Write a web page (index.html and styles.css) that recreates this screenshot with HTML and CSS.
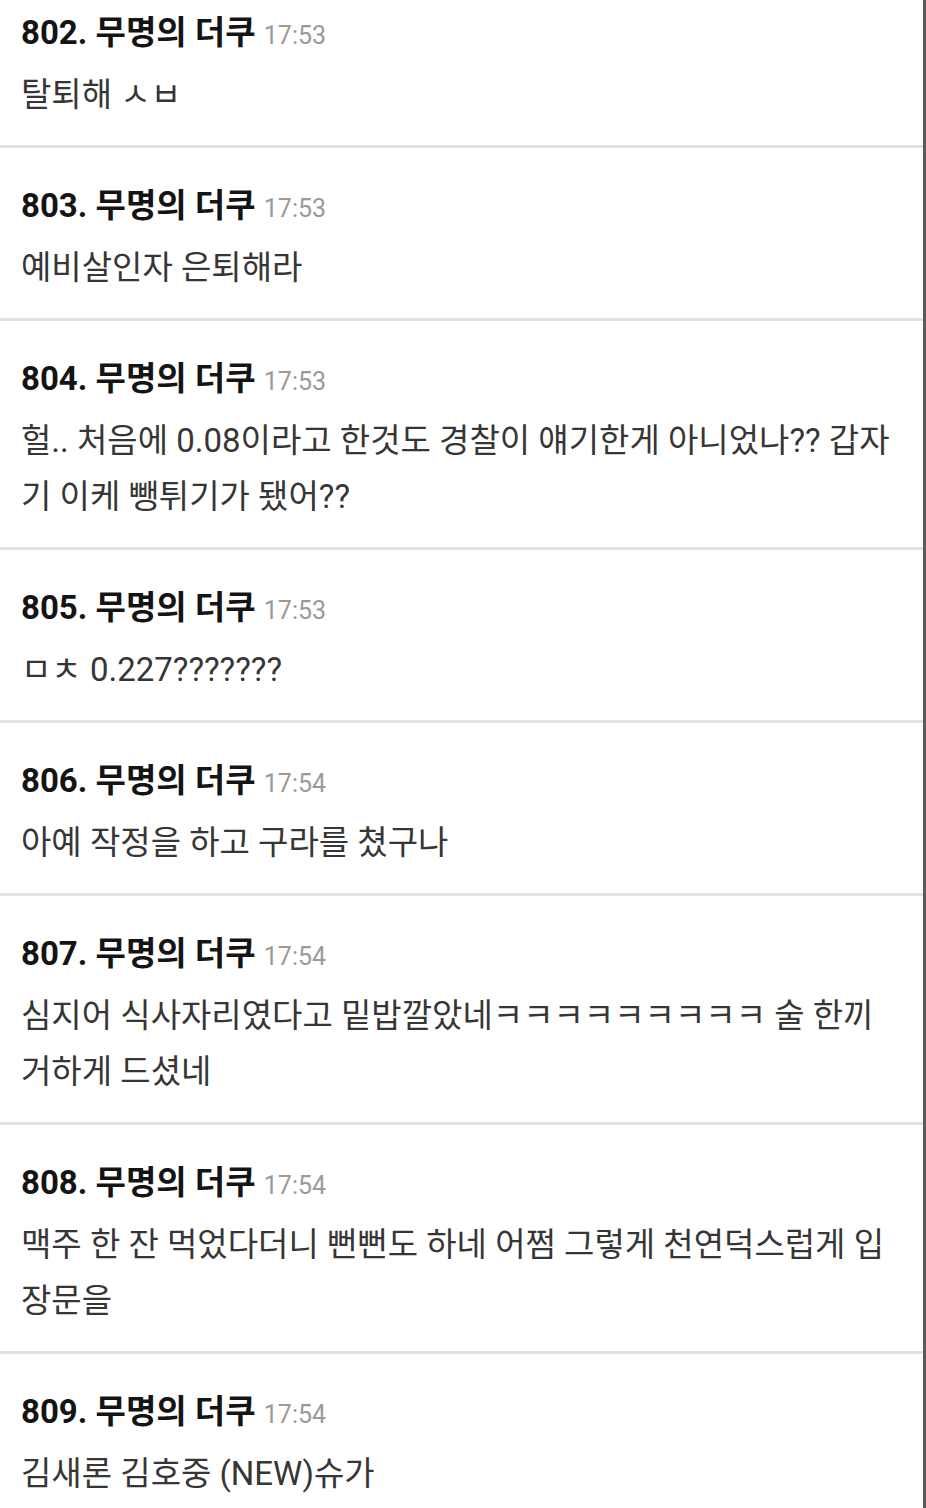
FILE: index.html
```html
<!DOCTYPE html>
<html lang="ko">
<head>
    <meta charset="UTF-8">
    <meta name="viewport" content="width=device-width, initial-scale=1.0">
    <title>댓글</title>
    <link rel="stylesheet" href="styles.css">
</head>
<body>
    <main class="comment-list">
        <div class="comment">
            <div class="comment-head"><span class="num">802.</span> 무명의 더쿠 <span class="time">17:53</span></div>
            <p class="comment-body">탈퇴해 ㅅㅂ</p>
        </div>
        <div class="comment">
            <div class="comment-head"><span class="num">803.</span> 무명의 더쿠 <span class="time">17:53</span></div>
            <p class="comment-body">예비살인자 은퇴해라</p>
        </div>
        <div class="comment">
            <div class="comment-head"><span class="num">804.</span> 무명의 더쿠 <span class="time">17:53</span></div>
            <p class="comment-body">헐.. 처음에 0.08이라고 한것도 경찰이 얘기한게 아니었나?? 갑자기 이케 뺑튀기가 됐어??</p>
        </div>
        <div class="comment">
            <div class="comment-head"><span class="num">805.</span> 무명의 더쿠 <span class="time">17:53</span></div>
            <p class="comment-body">ㅁㅊ 0.227???????</p>
        </div>
        <div class="comment">
            <div class="comment-head"><span class="num">806.</span> 무명의 더쿠 <span class="time">17:54</span></div>
            <p class="comment-body">아예 작정을 하고 구라를 쳤구나</p>
        </div>
        <div class="comment">
            <div class="comment-head"><span class="num">807.</span> 무명의 더쿠 <span class="time">17:54</span></div>
            <p class="comment-body">심지어 식사자리였다고 밑밥깔았네ㅋㅋㅋㅋㅋㅋㅋㅋㅋ 술 한끼 거하게 드셨네</p>
        </div>
        <div class="comment">
            <div class="comment-head"><span class="num">808.</span> 무명의 더쿠 <span class="time">17:54</span></div>
            <p class="comment-body">맥주 한 잔 먹었다더니 뻔뻔도 하네 어쩜 그렇게 천연덕스럽게 입장문을</p>
        </div>
        <div class="comment">
            <div class="comment-head"><span class="num">809.</span> 무명의 더쿠 <span class="time">17:54</span></div>
            <p class="comment-body">김새론 김호중 (NEW)슈가</p>
        </div>
    </main>
</body>
</html>
```

FILE: styles.css
```css
* {
    box-sizing: border-box;
}
body {
    margin: 0;
    padding: 0;
    background: #fff;
    font-family: Roboto, "Noto Sans CJK KR", sans-serif;
    overflow: hidden;
}
.comment-list {
    width: 926px;
    margin-top: -25px;
    border-right: 3px solid #5a5a5a;
}
.comment {
    padding: 26px 20px 22px 21px;
    border-bottom: 3px solid #e2e2e2;
}
.comment-head {
    height: 66px;
    line-height: 64px;
    font-size: 33px;
    font-weight: 700;
    color: #141414;
}
.comment-head .time {
    font-size: 25px;
    font-weight: 400;
    color: #9a9a9a;
}
.comment-body {
    margin: 0;
    font-size: 33px;
    line-height: 56px;
    color: #363636;
    word-break: break-all;
}
```
